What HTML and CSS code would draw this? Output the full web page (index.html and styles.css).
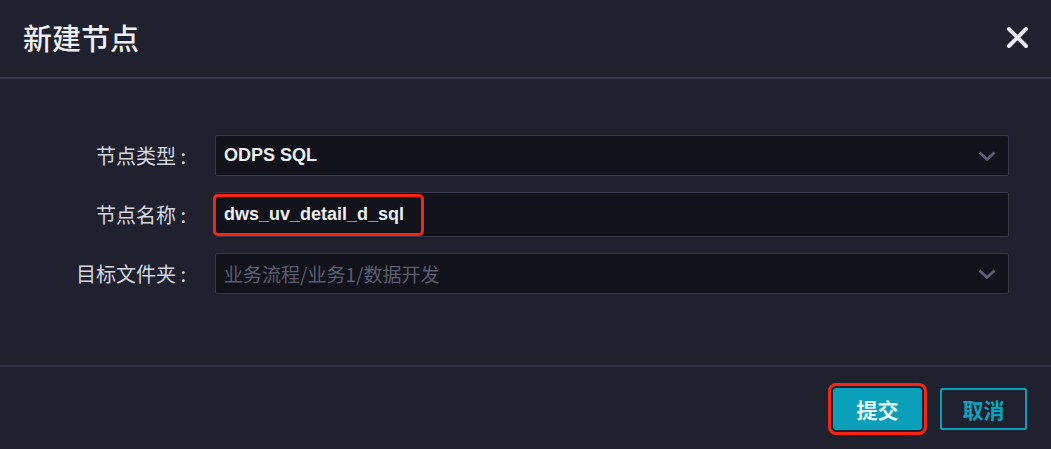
FILE: index.html
```html
<!DOCTYPE html>
<html lang="zh-CN">
<head>
<meta charset="utf-8">
<title>新建节点</title>
<link rel="stylesheet" href="styles.css">
</head>
<body>
<div class="dialog">
  <header class="dlg-header">
    <h1 class="dlg-title">新建节点</h1>
    <button class="dlg-close" aria-label="关闭">
      <svg width="23" height="23" viewBox="0 0 23 23"><path d="M3 3 L20 20 M20 3 L3 20" stroke="#e8e9f2" stroke-width="4" stroke-linecap="round" fill="none"/></svg>
    </button>
  </header>
  <main class="dlg-body">
    <div class="form-row">
      <label class="form-label">节点类型 :</label>
      <div class="field select">
        <span class="field-value">ODPS SQL</span>
        <svg class="chev" width="18" height="10" viewBox="0 0 18 10"><path d="M1.5 1.5 L9 8.5 L16.5 1.5" stroke="#5e6079" stroke-width="2.6" fill="none" stroke-linejoin="round"/></svg>
      </div>
    </div>
    <div class="form-row tall">
      <label class="form-label">节点名称 :</label>
      <div class="field input">
        <span class="field-value">dws_uv_detail_d_sql</span>
        <span class="highlight"></span>
      </div>
    </div>
    <div class="form-row">
      <label class="form-label">目标文件夹 :</label>
      <div class="field select">
        <span class="field-placeholder">业务流程/业务1/数据开发</span>
        <svg class="chev" width="18" height="10" viewBox="0 0 18 10"><path d="M1.5 1.5 L9 8.5 L16.5 1.5" stroke="#5e6079" stroke-width="2.6" fill="none" stroke-linejoin="round"/></svg>
      </div>
    </div>
  </main>
  <footer class="dlg-footer">
    <button class="btn btn-primary">提交</button>
    <button class="btn btn-ghost">取消</button>
  </footer>
</div>
</body>
</html>
```
FILE: styles.css
```css
* { box-sizing: border-box; }
html, body {
  margin: 0;
  padding: 0;
  background: #20212e;
  font-family: "Noto Sans CJK SC", "Liberation Sans", sans-serif;
}
.dialog {
  width: 1051px;
  height: 449px;
  display: flex;
  flex-direction: column;
  background: #20212e;
}
.dlg-header {
  height: 79px;
  flex: none;
  display: flex;
  align-items: center;
  justify-content: space-between;
  padding: 0 22px 2px 23px;
  border-bottom: 2px solid #35364a;
}
.dlg-title {
  margin: 0;
  font-size: 29px;
  font-weight: 500;
  color: #eeeff5;
  line-height: 1;
}
.dlg-close {
  background: none;
  border: 0;
  padding: 0;
  width: 23px;
  height: 23px;
  display: flex;
}
.dlg-body {
  flex: 1;
  padding: 56px 42px 0 0;
  display: flex;
  flex-direction: column;
  gap: 16px;
  border-bottom: 2px solid #2e2f42;
}
.form-row {
  display: flex;
  align-items: center;
  height: 41px;
}
.form-row.tall { height: 45px; }
.form-label {
  width: 190px;
  flex: none;
  text-align: right;
  padding-right: 4px;
  font-size: 20px;
  color: #d4d6e0;
  white-space: nowrap;
}
.field {
  position: relative;
  margin-left: 25px;
  flex: 1;
  height: 100%;
  background: #11121a;
  border: 1.5px solid #37384c;
  border-radius: 2px;
  display: flex;
  align-items: center;
  padding: 0 12px 0 8px;
}
.field-value {
  font-family: "Liberation Sans", "Noto Sans CJK SC", sans-serif;
  font-weight: 700;
  font-size: 18px;
  color: #eceef4;
}
.field-placeholder {
  font-size: 19px;
  color: #5b5d70;
}
.chev {
  margin-left: auto;
}
.highlight {
  position: absolute;
  left: -3px;
  top: 1px;
  width: 211px;
  height: 42px;
  border: 3.5px solid #fa2412;
  border-radius: 5px;
}
.dlg-footer {
  height: 82px;
  flex: none;
  display: flex;
  justify-content: flex-end;
  align-items: flex-start;
  gap: 18px;
  padding: 21px 24px 0 0;
}
.btn {
  height: 42px;
  font-family: "Noto Sans CJK SC", sans-serif;
  font-size: 21px;
  font-weight: 700;
  border-radius: 2px;
  padding: 0;
  line-height: 1;
}
.btn-primary {
  width: 89px;
  background: #0aa0ba;
  color: #e6f6f9;
  border: 1px solid #0aa0ba;
  outline: 3.5px solid #fa2412;
  outline-offset: 2.5px;
  border-radius: 3px;
}
.btn-ghost {
  width: 87px;
  background: transparent;
  color: #0ba3bd;
  border: 2px solid #0a9fb8;
}
```
